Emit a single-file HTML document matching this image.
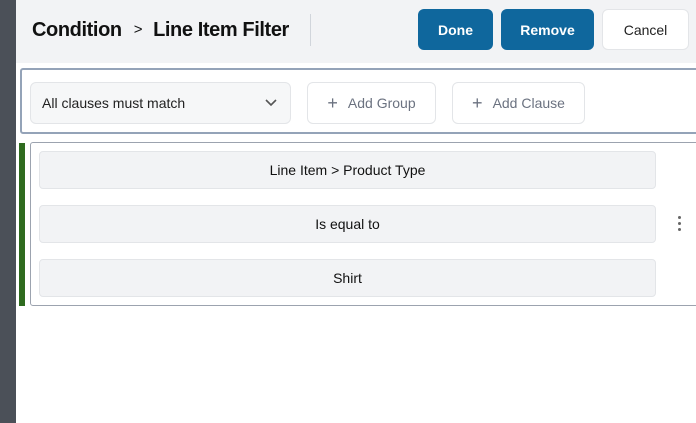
<!DOCTYPE html>
<html><head><style>
*{box-sizing:border-box;margin:0;padding:0}
body{width:696px;height:423px;overflow:hidden;background:#fff;font-family:"Liberation Sans",sans-serif;position:relative}
.abs{position:absolute}
.btn{position:absolute;top:9px;height:41px;border-radius:6px;font-size:14px;font-weight:bold;display:flex;align-items:center;justify-content:center}
.blue{background:#0f679d;color:#fff}
.row{position:absolute;left:39px;width:617px;height:38px;background:#f2f3f5;border:1px solid #e3e5e8;border-radius:4px;display:flex;align-items:center;justify-content:center;font-size:14px;color:#111}
.ob{position:absolute;top:82px;height:42px;border:1px solid #e3e5e8;border-radius:6px;background:#fff;display:flex;align-items:center;font-size:14px;color:#6b7280;justify-content:center}
</style></head><body>
<div class="abs" style="left:0;top:0;width:16px;height:423px;background:#4b5058"></div>
<div class="abs" style="left:16px;top:0;width:680px;height:63px;background:#f2f3f5"></div>
<div class="abs" style="left:32px;top:19px;font-size:20px;font-weight:bold;color:#111;white-space:nowrap;letter-spacing:-0.4px">Condition<span style="font-weight:normal;font-size:15px;margin:0 11px 0 12px;position:relative;top:-2px">&gt;</span>Line Item Filter</div>
<div class="abs" style="left:310px;top:14px;width:1px;height:32px;background:#d1d5db"></div>
<div class="btn blue" style="left:418px;width:75px">Done</div>
<div class="btn blue" style="left:501px;width:93px">Remove</div>
<div class="btn" style="left:602px;width:87px;background:#fff;border:1px solid #e3e5e8;color:#222;font-weight:normal">Cancel</div>
<div class="abs" style="left:20px;top:68px;width:690px;height:66px;border:2px solid #94a3b8;border-radius:3px"></div>
<div class="ob" style="left:30px;width:261px;background:#f6f7f8;justify-content:space-between;padding:0 12px 0 11px;color:#222">All clauses must match
<svg width="14" height="10" viewBox="0 0 14 10"><path d="M2 2l5 5 5-5" fill="none" stroke="#555" stroke-width="1.6"/></svg></div>
<div class="ob" style="left:307px;width:129px"><span style="font-size:18px;margin-right:10px">+</span>Add Group</div>
<div class="ob" style="left:452px;width:133px"><span style="font-size:18px;margin-right:10px">+</span>Add Clause</div>
<div class="abs" style="left:19px;top:143px;width:6px;height:163px;background:#2f6b1f"></div>
<div class="abs" style="left:30px;top:142px;width:680px;height:164px;border:1px solid #9ca3af;border-radius:3px"></div>
<div class="row" style="top:151px">Line Item &gt; Product Type</div>
<div class="row" style="top:205px">Is equal to</div>
<div class="row" style="top:259px">Shirt</div>
<div class="abs" style="left:678px;top:216px;width:4px;">
<div style="width:3px;height:3px;border-radius:50%;background:#666;margin-bottom:3px"></div>
<div style="width:3px;height:3px;border-radius:50%;background:#666;margin-bottom:3px"></div>
<div style="width:3px;height:3px;border-radius:50%;background:#666"></div></div>
</body></html>
